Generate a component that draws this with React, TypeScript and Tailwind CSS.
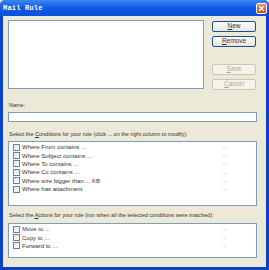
import React from 'react';

const conditions = [
  'Where From contains ...',
  'Where Subject contains ...',
  'Where To contains ...',
  'Where Cc contains ...',
  'Where size bigger than ... KB',
  'Where has attachment',
];

const actions = ['Move to ...', 'Copy to ...', 'Forward to ...'];

function Btn({ label, disabled }: { label: React.ReactNode; disabled?: boolean }) {
  return (
    <div
      className={`h-[11px] w-[44px] rounded-[2px] border flex items-center justify-center text-[6.5px] leading-none ${
        disabled
          ? 'border-[#c9c7ba] bg-[#f5f4ea] text-[#aca899]'
          : 'border-[#1f4d8c] bg-gradient-to-b from-white to-[#e6e4dc] text-[#333]'
      }`}
    >
      {label}
    </div>
  );
}

function Row({ text }: { text: string }) {
  return (
    <div className="h-[8.4px] flex items-center pl-[4px] pr-[29px]">
      <div className="w-[7px] h-[7px] border border-[#5f86b3] bg-gradient-to-br from-[#e4e4de] to-white shrink-0" />
      <span className="ml-[2px] flex-1 text-[6px] leading-none text-[#333] whitespace-nowrap">{text}</span>
      <span className="text-[5.5px] leading-none text-[#8a8a8a] tracking-[0.2px]">...</span>
    </div>
  );
}

export default function App() {
  return (
    <div
      className="w-[269px] h-[270px] flex flex-col bg-[#0842c8] rounded-t-[5px] overflow-hidden"
      style={{ fontFamily: '"Liberation Sans", Arial, sans-serif' }}
    >
      {/* title bar */}
      <div className="h-[16px] shrink-0 flex items-center px-[3px] bg-gradient-to-b from-[#3d86f5] via-[#0c5be2] to-[#0a52d6]">
        <span
          className="text-white font-bold text-[7px] leading-none tracking-[0.2px]"
          style={{ fontFamily: '"Liberation Mono", monospace' }}
        >
          Mail Rule
        </span>
        <div className="ml-auto mr-[-1px] w-[11px] h-[11px] rounded-[2px] border border-white bg-gradient-to-b from-[#f08a5f] to-[#d6431c] flex items-center justify-center">
          <svg width="7" height="7" viewBox="0 0 7 7">
            <path d="M1 1L6 6M6 1L1 6" stroke="white" strokeWidth="1.4" />
          </svg>
        </div>
      </div>

      {/* body */}
      <div className="flex-1 mx-[3px] mb-[3px] bg-[#ece9d8] pl-[5px] pr-[9px] pt-[4px] flex flex-col">
        <div className="flex">
          <div className="w-[196px] h-[69px] bg-white border border-[#7f9db9]" />
          <div className="ml-[8px] flex flex-col pt-[1px]">
            <Btn label={<><u>N</u>ew</>} />
            <div className="h-[4px]" />
            <Btn label={<><u>R</u>emove</>} />
            <div className="h-[17px]" />
            <Btn label={<><u>S</u>ave</>} disabled />
            <div className="h-[4px]" />
            <Btn label={<><u>C</u>ancel</>} disabled />
          </div>
        </div>

        <div className="mt-[12px] text-[5.5px] leading-[6px] text-[#333] pl-[1px]">Name:</div>
        <div className="mt-[4px] h-[10px] bg-white border border-[#7f9db9]" />

        <div className="mt-[9px] text-[5.5px] leading-[6px] text-[#333] pl-[1px] whitespace-nowrap">
          Select the <u>C</u>onditions for your rule (click ... on the right column to modify):
        </div>
        <div className="mt-[4px] h-[65px] bg-white border border-[#7f9db9] pt-[1px]">
          {conditions.map((c) => (
            <Row key={c} text={c} />
          ))}
        </div>

        <div className="mt-[6px] text-[5.5px] leading-[6px] text-[#333] pl-[1px] whitespace-nowrap">
          Select the <u>A</u>ctions for your rule (run when all the selected conditions were matched):
        </div>
        <div className="mt-[5px] h-[35px] bg-white border border-[#7f9db9] pt-[1px]">
          {actions.map((a) => (
            <Row key={a} text={a} />
          ))}
        </div>
      </div>
    </div>
  );
}
